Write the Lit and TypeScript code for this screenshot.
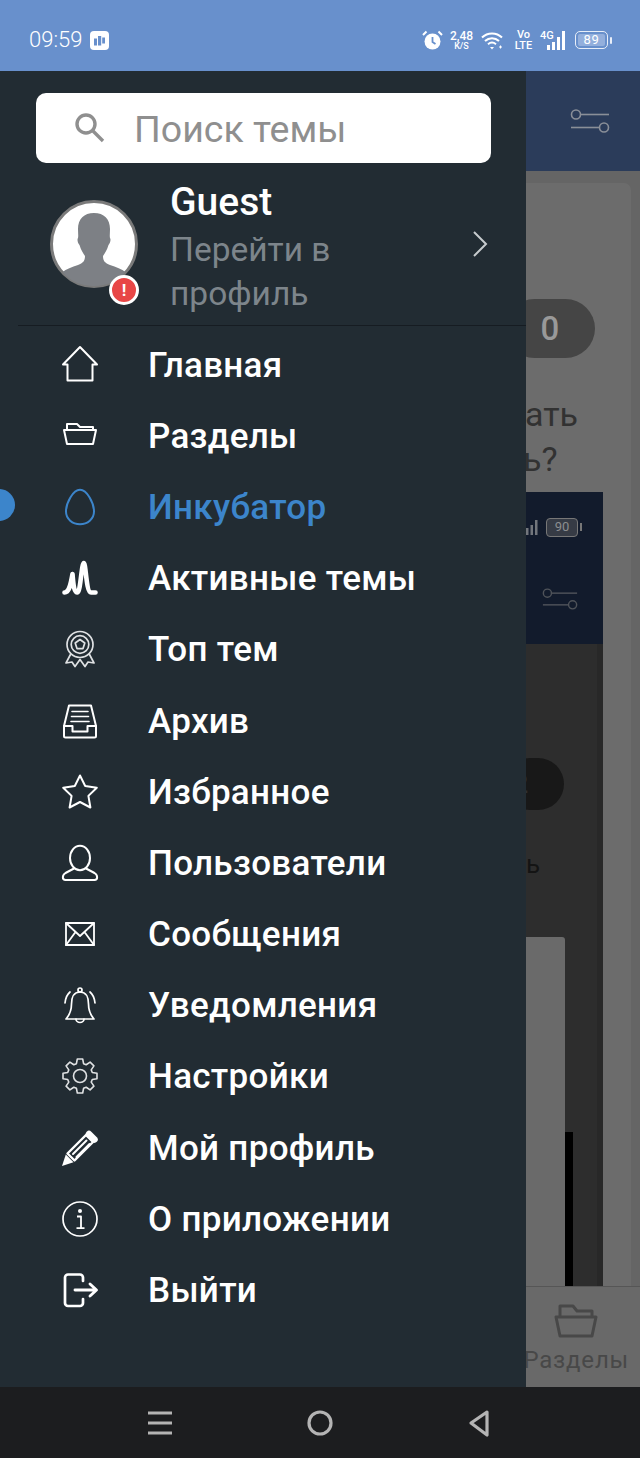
import { LitElement, html, css, svg } from "lit";
import { customElement } from "lit/decorators.js";

function gearPath(): string {
  const cx = 18, cy = 18, teeth = 8, ro = 17.2, ri = 12.8;
  const pts: string[] = [];
  for (let i = 0; i < teeth; i++) {
    const a = (i * 2 * Math.PI) / teeth - Math.PI / 2;
    const step = (2 * Math.PI) / teeth;
    const list: [number, number][] = [
      [ri, a - step * 0.36],
      [ro, a - step * 0.2],
      [ro, a + step * 0.2],
      [ri, a + step * 0.36],
    ];
    for (const [r, t] of list) {
      pts.push(`${(cx + r * Math.cos(t)).toFixed(2)} ${(cy + r * Math.sin(t)).toFixed(2)}`);
    }
  }
  return "M" + pts.join("L") + "Z";
}

const ICONS: Record<string, unknown> = {
  home: svg`<path d="M18 0 L35 17.500 H30.500 V33.500 H5.500 V17.500 H1Z"/>`,
  folder: svg`<path d="M5 12V6h10l3 3h13v3M2 12h32l-3 14H5z"/>`,
  egg: svg`<path d="M18 .8C25 .8 32 14 32 22.500C32 30 25.500 35.200 18 35.200C10.500 35.200 4 30 4 22.500C4 14 11 .8 18 .8Z"/>`,
  active: svg`<path stroke-width="4.600" d="M2.500 32.500C7 32.500 8.500 26 10.500 14C11.500 27 12.500 32.500 15.500 32.500C18.500 32.500 19.500 3 21.800 3C24 3 24 32.500 29 32.500H33.500"/>`,
  top: svg`<g stroke-width="1.700" stroke="#dfe1e3"><circle cx="18" cy="13.500" r="13"/><circle cx="18" cy="13.500" r="8.800"/><path d="M18 8.500l4.800 3.500-1.800 5.600h-6l-1.800-5.600z"/><path d="M8.500 23.500L4 32l6-1 3 4.500 5-7 5 7 3-4.500 6 1L27.500 23.500"/></g>`,
  archive: svg`<path d="M2 23L7 2.500H29L34 23V33a1.500 1.500 0 0 1-1.500 1.500H3.500A1.500 1.500 0 0 1 2 33Z"/><path d="M2 23H10.500V28.500H25.500V23H34"/><path d="M10 8.500H26M9.500 13.500H26.500M9 18.500H27" stroke-width="1.600"/>`,
  star: svg`<path d="M18 1.500L23.200 12 34.800 13.700 26.400 21.900 28.400 33.500 18 28 7.600 33.500 9.600 21.900 1.200 13.700 12.800 12Z"/>`,
  user: svg`<ellipse cx="18" cy="13" rx="10" ry="12.300"/><path d="M12 23.500L3.500 28C0 30 0 35 3.500 35H32.500C36 35 36 30 32.500 28L24 23.500"/>`,
  mail: svg`<g stroke-width="1.800"><path d="M4 7H32V29H4Z"/><path d="M4 7L18 20 32 7M4 29L13.500 16M32 29L22.500 16"/></g>`,
  bell: svg`<g stroke-width="1.700"><circle cx="18" cy="3" r="2"/><path d="M18 5C11.500 5 9.500 11 9.500 17C9.500 24 7.500 28 4 32H32C28.500 28 26.500 24 26.500 17C26.500 11 24.500 5 18 5Z"/><path d="M14 32a4 3.500 0 0 0 8 0M8 5C5 7.500 3.500 11 3 16M28 5C31 7.500 32.500 11 33 16"/></g>`,
  gear: svg`<g stroke-width="1.600" stroke="#dfe1e3"><path d="${gearPath()}"/><circle cx="18" cy="18" r="6.500"/></g>`,
  pencil: svg`<path d="M5.500 23.500L24 5 31 12 12.500 30.500Z" stroke-width="2.400"/><path d="M11 24L24.500 10.500M14.500 27L27.500 14" stroke-width="2"/><path d="M27 4L32.500 9.500" stroke-width="6.500"/><path d="M0 36L3.800 24.500 11.500 32.200Z" fill="currentColor" stroke="none"/>`,
  info: svg`<circle cx="18" cy="18" r="17" stroke-width="1.700"/><circle cx="18" cy="10" r="2" fill="currentColor" stroke="none"/><path d="M15 15.500H19V27M14.500 27.200H22.500" stroke-width="1.800" stroke-linecap="butt"/>`,
  logout: svg`<path d="M21 9V5.500a3 3 0 0 0-3-3H6a3 3 0 0 0-3 3V31a3 3 0 0 0 3 3H18a3 3 0 0 0 3-3V27" stroke-width="2.700"/><path d="M13 18H34M28 12L34.500 18 28 24" stroke-width="2.900"/>`,
};

const MENU: { icon: string; label: string; active?: boolean }[] = [
  { icon: "home", label: "Главная" },
  { icon: "folder", label: "Разделы" },
  { icon: "egg", label: "Инкубатор", active: true },
  { icon: "active", label: "Активные темы" },
  { icon: "top", label: "Топ тем" },
  { icon: "archive", label: "Архив" },
  { icon: "star", label: "Избранное" },
  { icon: "user", label: "Пользователи" },
  { icon: "mail", label: "Сообщения" },
  { icon: "bell", label: "Уведомления" },
  { icon: "gear", label: "Настройки" },
  { icon: "pencil", label: "Мой профиль" },
  { icon: "info", label: "О приложении" },
  { icon: "logout", label: "Выйти" },
];

const sliders = (cls: string) => html`<svg class=${cls} viewBox="0 0 40 24" fill="none" stroke="currentColor" stroke-width="1.600">
  <circle cx="6" cy="5.500" r="4.500"/><path d="M10.500 5.500H39"/><path d="M1 18.500H29"/><circle cx="34" cy="18.500" r="4.500"/></svg>`;

@customElement("app-root")
export class AppRoot extends LitElement {
  static styles = css`
    :host { display: block; width: 640px; height: 1458px; overflow: hidden; font-family: Roboto, "Noto Sans", sans-serif; background: #1c1d1f; }
    .status { height: 71px; background: #6890cc; display: flex; align-items: center; color: #fff; padding: 9px 28px 0 29px; box-sizing: border-box; }
    .time { font-size: 22px; font-weight: 300; line-height: 22px; width: 61px; }
    .mi { width: 19px; height: 19px; }
    .status-right { margin-left: auto; display: flex; align-items: center; }
    .alarm { width: 21px; height: 21px; margin-right: 6px; }
    .speed { display: flex; flex-direction: column; align-items: center; width: 25px; font-weight: 500; margin-right: 7px; }
    .speed b { font-size: 12px; line-height: 12px; font-weight: 500; }
    .speed i { font-size: 9px; line-height: 9px; font-style: normal; }
    .wifi { width: 22px; height: 19px; margin-right: 11px; }
    .volte { display: flex; flex-direction: column; align-items: center; width: 19px; font-size: 11px; line-height: 11px; font-weight: 500; margin-right: 7px; }
    .net { display: flex; align-items: flex-start; height: 21px; margin-right: 9px; }
    .net span { font-size: 11px; line-height: 11px; font-weight: 500; width: 16px; }
    .net svg { width: 19px; height: 21px; margin-left: -9px; }
    .batt { width: 33px; height: 18px; border: 1.500px solid #e8eef8; border-radius: 5px; box-sizing: border-box; padding: 2px; display: flex; }
    .batt span { flex: 1; background: #93afdc; border-radius: 2px; font-size: 13px; line-height: 12px; text-align: center; color: #fff; letter-spacing: 0.6px; }
    .nub { width: 2px; height: 7px; background: #e8eef8; margin-left: 2px; border-radius: 1px; }

    .main { position: relative; height: 1316px; overflow: hidden; }

    .under { height: 100%; display: flex; flex-direction: column; background: #646464; }
    .u-head { height: 100px; flex: none; background: #2b3c5a; display: flex; justify-content: flex-end; padding: 38px 30px 0 0; box-sizing: border-box; color: #8a8f98; }
    .s1 { width: 40px; height: 24px; }
    .u-body { flex: 1; display: flex; padding: 12px 9px 0 526px; min-height: 0; background: #656565; }
    .card { flex: 1; background: #6c6c6c; border-top-right-radius: 7px; display: flex; flex-direction: column; padding-top: 116px; min-width: 0; }
    .pill { width: 90px; height: 59px; margin-left: -21px; background: #454545; border-radius: 30px; display: flex; align-items: center; justify-content: center; color: #999; font-size: 33px; font-weight: 500; flex: none; }
    .q { font-size: 34px; line-height: 45px; color: #323232; margin: 34px 0 10px; width: 54px; white-space: nowrap; }
    .q .a { margin-left: -1px; }
    .q .b { margin-left: -3px; }
    .shot { flex: 1; width: 77px; display: flex; flex-direction: column; min-height: 0; background: #2d2d2d; }
    .s-head { height: 152px; flex: none; background: #121b2c; display: flex; flex-direction: column; align-items: flex-end; padding: 26px 25px 0 0; box-sizing: border-box; color: #72767c; }
    .s-stat { display: flex; align-items: center; gap: 8px; margin-right: 0; }
    .s-bars { width: 12px; height: 15px; }
    .s-batt { width: 32px; height: 19px; border: 1.500px solid #777; border-radius: 4px; box-sizing: border-box; background: #363b45; font-size: 13px; line-height: 16px; text-align: center; color: #8b8d90; position: relative; }
    .s-batt::after { content: ""; position: absolute; right: -5px; top: 4px; width: 2px; height: 8px; background: #777; }
    .s2 { width: 36px; height: 22px; margin: 51px 0 0 0; color: #4f5359; }
    .s-body { flex: 1; display: flex; flex-direction: column; padding-top: 114px; min-height: 0; background: #2d2d2d; border-right: 6px solid #282828; }
    .pill2 { width: 60px; height: 52px; margin-left: -22px; padding-right: 26px; box-sizing: border-box; background: #181818; border-radius: 26px; flex: none; display: flex; align-items: center; justify-content: center; color: #303030; font-size: 26px; font-weight: 500; }
    .t2 { font-size: 26px; line-height: 30px; color: #141414; margin: 39px 0 58px; flex: none; height: 30px; }
    .inner { flex: 1; display: flex; min-height: 0; }
    .inner-w { width: 39px; background: #6a6a6a; border-top-right-radius: 3px; flex: none; }
    .inner-d { flex: 1; padding-top: 195px; display: flex; }
    .inner-b { width: 8px; background: #000; }

    .tabbar { height: 101px; flex: none; background: #696969; border-top: 1px solid #565656; box-sizing: border-box; display: flex; flex-direction: column; align-items: flex-end; padding: 17px 11px 0 0; color: #484848; }
    .tab-ic { width: 44px; height: 34px; margin-right: 31px; }
    .tab-l { font-size: 24px; line-height: 28px; margin-top: 8px; letter-spacing: 0.8px; }

    .drawer { position: absolute; left: 0; top: 0; bottom: 0; width: 526px; background: #222c33; display: flex; flex-direction: column; }
    .search { margin: 22px 35px 0 36px; height: 70px; flex: none; background: #fff; border-radius: 10px; display: flex; align-items: center; color: #8f8f8f; }
    .search svg { width: 32px; height: 32px; margin-left: 37px; flex: none; }
    .search span { font-size: 37.500px; margin-left: 29px; line-height: 40px; padding-top: 1px; }
    .profile { height: 163px; flex: none; display: flex; margin-left: 18px; border-bottom: 1.500px solid #161c22; box-sizing: border-box; position: relative; padding-left: 32px; }
    .avatar { position: relative; width: 88px; height: 88px; margin-top: 37px; flex: none; }
    .avatar svg { width: 88px; height: 88px; display: block; }
    .badge { position: absolute; right: -1px; bottom: -17px; width: 30px; height: 30px; box-sizing: border-box; border: 3px solid #fff; border-radius: 50%; background: #e84646; color: #fff; font-size: 17px; font-weight: 700; line-height: 24px; text-align: center; }
    .who { margin-left: 33px; width: 200px; padding-top: 17px; }
    .name { font-size: 39px; line-height: 44px; color: #fff; font-weight: 500; margin-left: -1px; }
    .sub { font-size: 33.500px; line-height: 44px; color: #7d858b; margin: 4px 0 0 -1px; }
    .chev { width: 16px; height: 28px; margin: 67px 0 0 auto; margin-right: 38px; color: #c7cbce; }
    .menu { display: flex; flex-direction: column; padding-top: 3px; position: relative; }
    .row { height: 71.200px; display: flex; align-items: center; color: #fff; position: relative; flex: none; }
    .row svg { width: 36px; height: 36px; margin-left: 62px; flex: none; overflow: visible; fill: none; stroke: currentColor; stroke-width: 2; stroke-linejoin: round; stroke-linecap: round; }
    .row span { font-size: 35px; letter-spacing: 0.300px; font-weight: 500; margin-left: 50px; line-height: 40px; padding-top: 2px; color: #fff; }
    .row.on, .row.on span { color: #3c85cb; }
    .dot { position: absolute; left: -17px; top: 18px; width: 32px; height: 32px; border-radius: 50%; background: #3c85cb; }

    .nav { height: 71px; background: #1c1d1f; display: flex; align-items: center; justify-content: center; color: #b4b4b4; }
    .nav svg { width: 360px; height: 40px; }
  `;

  render() {
    return html`
      <div class="status">
        <span class="time">09:59</span>
        <svg class="mi" viewBox="0 0 19 19"><rect width="19" height="19" rx="4" fill="#fff"/><path d="M4 7.500h3v7H4zM8 5h3.200v9.500H8zM12.200 6.500H15v6h-2.800z" fill="#6890cc"/></svg>
        <div class="status-right">
          <svg class="alarm" viewBox="0 0 21 21"><circle cx="10.500" cy="11.500" r="8" fill="#fff"/><path d="M10.500 7v5l3 2" stroke="#6890cc" stroke-width="1.800" fill="none"/><path d="M1 5l3.500-3.500M20 5l-3.500-3.500" stroke="#fff" stroke-width="2"/></svg>
          <div class="speed"><b>2,48</b><i>K/S</i></div>
          <svg class="wifi" viewBox="0 0 22 19" fill="none" stroke="#fff" stroke-width="2"><path d="M1 6.500C6.500 1 15.500 1 21 6.500M4 10c4-3.800 10-3.800 14 0M7 13.200c2.400-2 5.600-2 8 0"/><path d="M9 16h4l-2 2.500z" fill="#fff" stroke="none"/><path d="M18 16h3M19.500 14.500v3" stroke-width="1"/></svg>
          <div class="volte"><span>Vo</span><span>LTE</span></div>
          <div class="net"><span>4G</span><svg viewBox="0 0 19 21" fill="#fff"><rect x="0" y="15" width="3" height="5"/><rect x="5" y="12" width="3" height="8"/><rect x="10" y="7" width="3" height="13"/><rect x="15" y="1" width="3" height="19"/></svg></div>
          <div class="batt"><span>89</span></div><div class="nub"></div>
        </div>
      </div>

      <div class="main">
        <div class="under">
          <div class="u-head">${sliders("s1")}</div>
          <div class="u-body">
            <div class="card">
              <div class="pill">0</div>
              <div class="q"><div class="a">ать</div><div class="b">ь?</div></div>
              <div class="shot">
                <div class="s-head">
                  <div class="s-stat">
                    <svg class="s-bars" viewBox="0 0 12 15" fill="currentColor"><rect x="0" y="8" width="2.500" height="7"/><rect x="4.500" y="5" width="2.500" height="10"/><rect x="9" y="0" width="2.500" height="15"/></svg>
                    <div class="s-batt">90</div>
                  </div>
                  ${sliders("s2")}
                </div>
                <div class="s-body">
                  <div class="pill2">2</div>
                  <div class="t2">ь</div>
                  <div class="inner">
                    <div class="inner-w"></div>
                    <div class="inner-d"><div class="inner-b"></div></div>
                  </div>
                </div>
              </div>
            </div>
          </div>
          <div class="tabbar">
            <svg class="tab-ic" viewBox="0 0 44 34" fill="none" stroke="currentColor" stroke-width="3" stroke-linejoin="round"><path d="M6 12V2h13l4 5h15v5"/><path d="M2 13h40l-4 19H6z"/></svg>
            <div class="tab-l">Разделы</div>
          </div>
        </div>

        <div class="drawer">
          <div class="search">
            <svg viewBox="0 0 32 32" fill="none" stroke="currentColor" stroke-width="3.400"><circle cx="13" cy="12" r="9"/><path d="M19.500 18.500L30 29"/></svg>
            <span>Поиск темы</span>
          </div>
          <div class="profile">
            <div class="avatar">
              <svg viewBox="0 0 88 88">
                <circle cx="44" cy="44" r="42.500" fill="#fff" stroke="#7a7a7a" stroke-width="3"/>
                <path fill="#7d8085" d="M44 13C34 13 28 19 28 29C28 33 28.500 36 28 38C27 39 27.500 43 29.500 45C31 50 33 53 35 56C35 61 33 63 28 65C22 67 16 69 12.500 72C20 81 31 86 44 86C57 86 68 81 75.500 72C72 69 66 67 60 65C55 63 53 61 53 56C55 53 57 50 58.500 45C60.500 43 61 39 60 38C59.500 36 60 33 60 29C60 19 54 13 44 13Z"/>
              </svg>
              <div class="badge">!</div>
            </div>
            <div class="who">
              <div class="name">Guest</div>
              <div class="sub">Перейти в профиль</div>
            </div>
            <svg class="chev" viewBox="0 0 16 28" fill="none" stroke="currentColor" stroke-width="2"><path d="M2 2L14 14 2 26"/></svg>
          </div>
          <div class="menu">
            ${MENU.map(
              (m) => html`<div class="row ${m.active ? "on" : ""}">
                ${m.active ? html`<div class="dot"></div>` : ""}
                <svg viewBox="0 0 36 36">${ICONS[m.icon]}</svg>
                <span>${m.label}</span>
              </div>`
            )}
          </div>
        </div>
      </div>

      <div class="nav">
        <svg viewBox="0 0 360 40" fill="none" stroke="currentColor" stroke-width="3.200" stroke-linejoin="round">
          <path d="M8 10H32M8 20H32M8 30H32"/>
          <circle cx="180" cy="20" r="11"/>
          <path d="M347 9L331 20 347 32Z"/>
        </svg>
      </div>
    `;
  }
}
